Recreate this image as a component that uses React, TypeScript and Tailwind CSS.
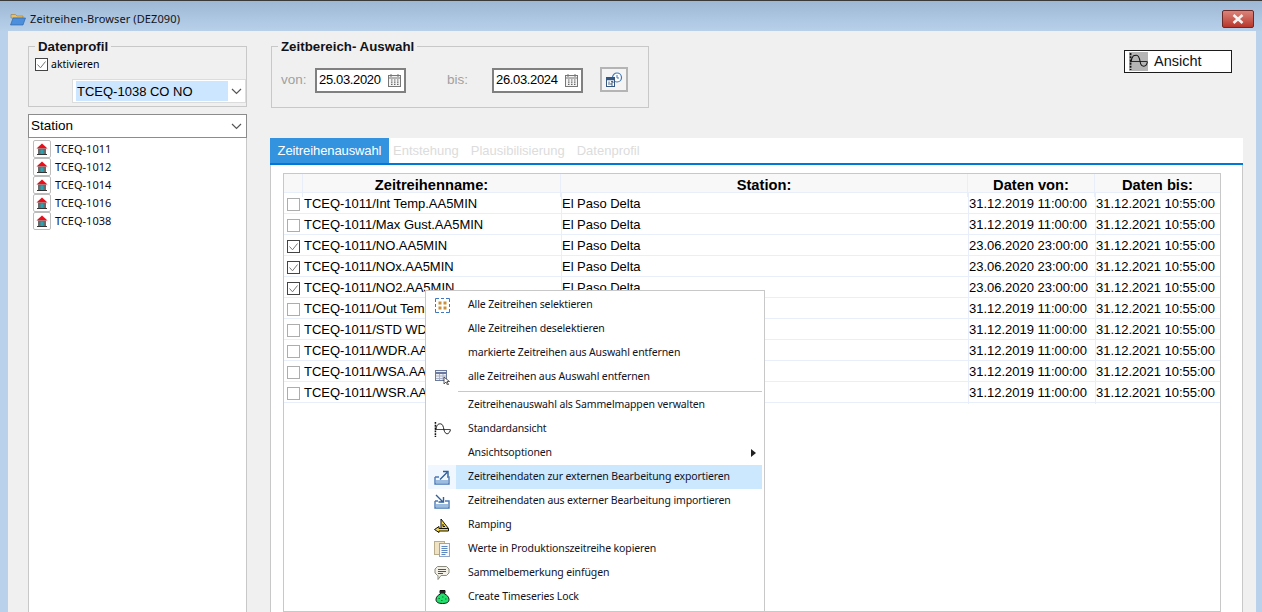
import React from 'react';

const rows = [
  { name: 'TCEQ-1011/Int Temp.AA5MIN', station: 'El Paso Delta', from: '31.12.2019 11:00:00', checked: false },
  { name: 'TCEQ-1011/Max Gust.AA5MIN', station: 'El Paso Delta', from: '31.12.2019 11:00:00', checked: false },
  { name: 'TCEQ-1011/NO.AA5MIN', station: 'El Paso Delta', from: '23.06.2020 23:00:00', checked: true },
  { name: 'TCEQ-1011/NOx.AA5MIN', station: 'El Paso Delta', from: '23.06.2020 23:00:00', checked: true },
  { name: 'TCEQ-1011/NO2.AA5MIN', station: 'El Paso Delta', from: '23.06.2020 23:00:00', checked: true },
  // station cells below sit fully under the open context menu
  { name: 'TCEQ-1011/Out Temp.AA5MIN', station: '', from: '31.12.2019 11:00:00', checked: false },
  { name: 'TCEQ-1011/STD WD.AA5MIN', station: '', from: '31.12.2019 11:00:00', checked: false },
  { name: 'TCEQ-1011/WDR.AA5MIN', station: '', from: '31.12.2019 11:00:00', checked: false },
  { name: 'TCEQ-1011/WSA.AA5MIN', station: '', from: '31.12.2019 11:00:00', checked: false },
  { name: 'TCEQ-1011/WSR.AA5MIN', station: '', from: '31.12.2019 11:00:00', checked: false },
];

const stations = ['TCEQ-1011', 'TCEQ-1012', 'TCEQ-1014', 'TCEQ-1016', 'TCEQ-1038'];

const Chevron = () => (
  <svg width="11" height="7" viewBox="0 0 11 7" fill="none" stroke="#555" strokeWidth="1.2">
    <path d="M1 1l4.500 4.500L10 1" />
  </svg>
);

const Check = ({ dark }: { dark: boolean }) => (
  <span className={`flex h-[13px] w-[13px] shrink-0 items-center justify-center border bg-white ${dark ? 'border-[#444]' : 'border-[#adadad]'}`}>
    {dark && (
      <svg width="9" height="8" viewBox="0 0 9 8" fill="none" stroke="#777" strokeWidth="1">
        <path d="M0.500 3.500L3.500 6.800L8.500 0.500" />
      </svg>
    )}
  </span>
);

const House = () => (
  <span className="flex h-[18px] w-[18px] items-center justify-center rounded-[2px] border border-[#bdbdbd] bg-white">
    <svg width="12" height="12" viewBox="0 0 12 12">
      <path d="M6 0.500L11.500 5.500H0.500z" fill="#e8101c" />
      <rect x="2" y="5.500" width="8" height="5.500" fill="#6a6a6a" />
      <rect x="4.500" y="6.500" width="3" height="4.500" fill="#27a5b5" />
      <rect x="1" y="11" width="10" height="1" fill="#333" />
    </svg>
  </span>
);

const Calendar = () => (
  <svg width="15" height="15" viewBox="0 0 15 15" fill="none">
    <rect x="1.500" y="2.500" width="12" height="11" fill="#f4f4f4" stroke="#777" />
    <path d="M1.500 5h12" stroke="#777" />
    <path d="M4 1v3M11 1v3" stroke="#777" />
    <path d="M4 7h1.500M7 7h1.500M10 7h1.500M4 9.200h1.500M7 9.200h1.500M10 9.200h1.500M4 11.400h1.500M7 11.400h1.500M10 11.400h1.500" stroke="#666" strokeWidth="1.200" />
  </svg>
);

const Wave = ({ w = 18 }: { w?: number }) => (
  <svg width={w} height={w} viewBox="0 0 18 18" fill="none" stroke="#111" strokeWidth="1">
    <path d="M1.500 1v16" strokeDasharray="2 1" strokeWidth="1.600" />
    <path d="M1 9h16" strokeWidth="0.800" />
    <path d="M2 9C3 3 5 3 7 3s3 3 3.500 6 2 4.500 3.500 4.500 3-2 3.500-4.500" />
  </svg>
);

const icons: Record<string, React.ReactNode> = {
  grid: (
    <svg width="15" height="15" viewBox="0 0 15 15" fill="none">
      <path d="M0.500 4V0.500H4M11 0.500h3.500V4M14.500 11v3.500H11M4 14.500H0.500V11M0.500 6v3M14.500 6v3M6 0.500h3M6 14.500h3" stroke="#3f78c0" />
      <rect x="3.500" y="3.500" width="3" height="3" fill="#c98f3a" />
      <rect x="8.500" y="3.500" width="3" height="3" fill="#c98f3a" />
      <rect x="3.500" y="8.500" width="3" height="3" fill="#c98f3a" />
      <rect x="8.500" y="8.500" width="3" height="3" fill="#c98f3a" />
    </svg>
  ),
  table: (
    <svg className="ml-[1px]" width="16" height="15" viewBox="0 0 16 15" fill="none">
      <rect x="0.500" y="0.500" width="11" height="10" fill="#eef0f6" stroke="#6c7aa0" />
      <path d="M0.500 3h11" stroke="#6c7aa0" strokeWidth="2" />
      <path d="M1 6h10M1 8.500h10M4.500 4v6M8 4v6" stroke="#a9b2c8" />
      <path d="M9 7v7l2-2 1.500 3 1-.5-1.500-3h2.500z" fill="#fff" stroke="#333" strokeWidth="0.800" />
    </svg>
  ),
  export: (
    <svg width="16" height="15" viewBox="0 0 16 15" fill="none">
      <path d="M1 7h4M1 7v7h14V7h-2" stroke="#4a7ab5" strokeWidth="1.400" />
      <rect x="2" y="10" width="12" height="3.500" fill="#9dbde0" />
      <path d="M6 9.500L13 2.500M9 1.500h5v5" stroke="#2f5f9a" strokeWidth="1.400" />
    </svg>
  ),
  import: (
    <svg width="16" height="15" viewBox="0 0 16 15" fill="none">
      <path d="M1 7h3M1 7v7h14V7h-4" stroke="#4a7ab5" strokeWidth="1.400" />
      <rect x="2" y="10" width="12" height="3.500" fill="#9dbde0" />
      <path d="M2 1l6.500 6.500M9.500 3v5h-5" stroke="#2f5f9a" strokeWidth="1.400" />
    </svg>
  ),
  ramp: (
    <svg width="16" height="15" viewBox="0 0 16 15" fill="none">
      <path d="M7 1L14.500 10.500H7z" fill="#f5d63c" stroke="#111" />
      <path d="M9 6v2.500h2" stroke="#111" />
      <path d="M0.500 11.500L5 8.500v2h9.500v2.500H5v1.500z" fill="#f5d63c" stroke="#111" />
    </svg>
  ),
  copy: (
    <svg width="16" height="16" viewBox="0 0 16 16" fill="none">
      <rect x="0.500" y="0.500" width="10" height="13" fill="#efe3c4" stroke="#b9ad8c" />
      <rect x="5.500" y="2.500" width="10" height="13" fill="#f5f8fd" stroke="#8fa6c8" />
      <path d="M7.500 5.500h6M7.500 7.500h6M7.500 9.500h6M7.500 11.500h6M7.500 13.500h4" stroke="#5f86bd" />
    </svg>
  ),
  note: (
    <svg width="16" height="16" viewBox="0 0 16 16" fill="none">
      <path d="M3.500 1.500h9l2.500 2.500v4l-2.500 2.500H7L4 14.500v-4H3.500L1 8V4z" fill="#f1efe6" stroke="#8c8c80" />
      <path d="M4 4.500h8M4 6.500h8M4 8.500h5" stroke="#55554c" />
    </svg>
  ),
  flask: (
    <svg width="15" height="14" viewBox="0 0 15 14" fill="none">
      <path d="M5 0.500h5v2l-0.500 1.500c2.500 1 4.500 3 4.500 5.500 0 2.500-2 4-6.500 4s-6.500-1.500-6.500-4c0-2.500 2-4.500 4.500-5.500L5 2.500z" fill="#1fe06a" stroke="#111" />
      <path d="M5 1h5v2.500H5z" fill="#222" />
      <path d="M3.500 8.500h1.500M7 7h1.500M6 10.500h1.500M10 9h1.500" stroke="#0a7a30" />
    </svg>
  ),
  sine: <Wave w={17} />,
};

type MenuEntry = { label: string; icon?: string; arrow?: boolean; active?: boolean } | 'sep';

const menu: MenuEntry[] = [
  { label: 'Alle Zeitreihen selektieren', icon: 'grid' },
  { label: 'Alle Zeitreihen deselektieren' },
  { label: 'markierte Zeitreihen aus Auswahl entfernen' },
  { label: 'alle Zeitreihen aus Auswahl entfernen', icon: 'table' },
  'sep',
  { label: 'Zeitreihenauswahl als Sammelmappen verwalten' },
  { label: 'Standardansicht', icon: 'sine' },
  { label: 'Ansichtsoptionen', arrow: true },
  { label: 'Zeitreihendaten zur externen Bearbeitung exportieren', icon: 'export', active: true },
  { label: 'Zeitreihendaten aus externer Bearbeitung importieren', icon: 'import' },
  { label: 'Ramping', icon: 'ramp' },
  { label: 'Werte in Produktionszeitreihe kopieren', icon: 'copy' },
  { label: 'Sammelbemerkung einfügen', icon: 'note' },
  { label: 'Create Timeseries Lock', icon: 'flask' },
];

const DateBox = ({ value }: { value: string }) => (
  <div className="flex h-[25px] w-[91px] items-center justify-between border-2 border-[#808080] bg-white pl-[2px] pr-[2px] text-[13px] text-black">
    <span className="tracking-[-0.35px]">{value}</span>
    <Calendar />
  </div>
);

export default function App() {
  return (
    <div className="relative flex h-[612px] w-[1262px] flex-col overflow-hidden border-t border-[#3a3a3a] bg-[#b9d1ea] font-['Liberation_Sans',sans-serif] text-[13px] text-black">
      <div className="flex h-[30px] shrink-0 items-center bg-gradient-to-b from-[#9db8d5] to-[#b8d0ea] pl-[10px] pr-[8px] pt-[6px]">
        <svg width="16" height="14" viewBox="0 0 16 14">
          <path d="M1 2.500h4.500L7 4h6v2H1z" fill="#e8c06a" stroke="#9a7c3a" strokeWidth="0.600" />
          <path d="M0.500 13L3 6h12.500L13 13z" fill="#4c8fdc" stroke="#2c5f9f" strokeWidth="0.600" />
        </svg>
        <span className="ml-[4px] font-['Noto_Sans',sans-serif] text-[11px] tracking-[0.1px] text-[#10151c]">Zeitreihen-Browser (DEZ090)</span>
        <button className="ml-auto flex h-[18px] w-[32px] items-center justify-center rounded-[2px] border border-[#6b2a28] bg-gradient-to-b from-[#d9837a] to-[#b8352b]">
          <svg width="14" height="10" viewBox="0 0 14 10" fill="none" stroke="#f4f4f4" strokeWidth="2.600">
            <path d="M2.500 1l9 8M11.500 1l-9 8" />
          </svg>
        </button>
      </div>

      <div className="ml-[8px] mr-[6px] flex min-h-0 flex-1 bg-[#f0f0f0] pl-[20px]">
        <aside className="flex w-[219px] shrink-0 flex-col pt-[15px]">
          <div className="relative h-[61px] border border-[#c8c8c8]">
            <span className="absolute left-[6px] top-[-8px] bg-[#f0f0f0] px-[3px] text-[13.3px] font-bold leading-[16px] text-[#10131a]">Datenprofil</span>
            <div className="ml-[6px] mt-[11px] flex items-center">
              <Check dark />
              <span className="ml-[3px] font-['Noto_Sans',sans-serif] text-[10.5px] leading-[13px]">aktivieren</span>
            </div>
            <div className="ml-[43px] mt-[8px] flex h-[24px] items-center border border-[#dcdcdc] bg-white pl-[2px]">
              <span className="ml-[1px] flex h-[20px] w-[152px] items-center bg-[#cde6ff] pl-[1px] text-[13px] leading-none">TCEQ-1038 CO NO</span>
              <span className="ml-[3px]"><Chevron /></span>
            </div>
          </div>
          <div className="mt-[7px] flex h-[24px] shrink-0 items-center justify-between border border-[#8c8c8c] bg-white pl-[2px] pr-[4px] text-[13.5px]">
            <span>Station</span>
            <Chevron />
          </div>
          <div className="flex min-h-0 flex-1 flex-col border-x border-[#c8c8c8] bg-white pl-[4px] pt-[2px]">
            {stations.map(s => (
              <div key={s} className="flex h-[18px] items-center">
                <House />
                <span className="ml-[4px] font-['Noto_Sans',sans-serif] text-[11px] text-[#0c0c18]">{s}</span>
              </div>
            ))}
          </div>
        </aside>

        <main className="ml-[23px] flex w-[973px] shrink-0 flex-col pt-[15px]">
          <div className="flex h-[92px] shrink-0 items-start">
            <div className="relative ml-[1px] flex h-[62px] w-[378px] items-center border border-[#c8c8c8] pl-[9px] pt-[6px] text-[#a0a0a0]">
              <span className="absolute left-[6px] top-[-8px] bg-[#f0f0f0] px-[3px] text-[13.3px] font-bold leading-[16px] text-[#10131a]">Zeitbereich- Auswahl</span>
              <span className="w-[34px] text-[13.5px]">von:</span>
              <DateBox value="25.03.2020" />
              <span className="ml-[41px] w-[45px] text-[13.5px]">bis:</span>
              <DateBox value="26.03.2024" />
              <button className="ml-[17px] mt-[-2px] flex h-[25px] w-[28px] items-center justify-center border-2 border-[#b4b4b4] bg-[#f4f4f4]">
                <svg width="17" height="15" viewBox="0 0 17 15" fill="none">
                  <circle cx="11" cy="5.500" r="4.500" fill="#fff" stroke="#3f78b8" strokeWidth="1.200" />
                  <path d="M11 3v3h2" stroke="#3f78b8" />
                  <rect x="0.500" y="5.500" width="8" height="9" fill="#fff" stroke="#35567f" />
                  <path d="M0.500 7h8" stroke="#35567f" strokeWidth="2.500" />
                  <path d="M3 9.500v3.500M5 9.500h2v1.500H5v2h2" stroke="#35567f" strokeWidth="0.900" />
                </svg>
              </button>
            </div>
            <button className="ml-auto mr-[11px] mt-[4px] flex h-[23px] w-[108px] items-center border border-[#1c1c1c] bg-white pl-[4px] text-[14.5px]">
              <span className="bg-[#b4b4b4]"><Wave w={19} /></span>
              <span className="ml-[6px] text-[#10131a]">Ansicht</span>
            </button>
          </div>

          <div className="flex h-[27px] shrink-0 items-stretch border-b-2 border-[#0078d7] bg-white text-[13px] text-[#dcdcdc]">
            <span className="flex w-[119px] items-center justify-center bg-[#3393df] tracking-[-0.1px] text-white">Zeitreihenauswahl</span>
            <span className="ml-[4px] flex items-center">Entstehung</span>
            <span className="ml-[12px] flex items-center">Plausibilisierung</span>
            <span className="ml-[12px] flex items-center">Datenprofil</span>
          </div>

          <div className="flex min-h-0 flex-1 flex-col border-x border-[#c8c8c8] bg-white pl-[12px] pr-[21px] pt-[8px]">
            <div className="flex-1 border border-[#c8c8c8] text-[13px]">
              <div className="grid h-[18px] grid-cols-[19px_258px_407px_127px_125px] bg-[#f8f8f8] text-[14.7px] font-bold leading-[23px]">
                <span className="border-r border-[#e8eefa]" />
                <span className="border-r border-[#e8eefa] text-center">Zeitreihenname:</span>
                <span className="border-r border-[#e8eefa] text-center">Station:</span>
                <span className="border-r border-[#e8eefa] text-center">Daten von:</span>
                <span className="text-center">Daten bis:</span>
              </div>
              {rows.map(r => (
                <div key={r.name} className="grid h-[21px] grid-cols-[19px_258px_407px_127px_125px] border-t border-[#e8eefa] leading-[22px] tracking-[-0.02px]">
                  <span className="flex items-center pl-[3px] pt-[1px]"><Check dark={r.checked} /></span>
                  <span className="border-r border-transparent pl-[1px]">{r.name}</span>
                  <span className="border-l border-[#e8eefa]">{r.station}</span>
                  <span className="border-l border-[#e8eefa]">{r.from}</span>
                  <span className="border-l border-[#e8eefa]">31.12.2021 10:55:00</span>
                </div>
              ))}
              <div className="border-t border-[#e8eefa]" />
            </div>
          </div>
        </main>
      </div>

      <div className="absolute left-[425px] top-[289px] w-[340px] border border-[#c8c8c8] bg-white px-[2px] pb-[2px] pt-[2px] font-['Noto_Sans',sans-serif] text-[10.5px] tracking-[-0.12px] text-[#12121e]">
        {menu.map((m, i) =>
          m === 'sep' ? (
            <div key={i} className="mb-[1px] ml-[30px] h-[3px] border-b border-[#c8c8c8]" />
          ) : (
            <div key={i} className="flex h-[24px] items-center">
              <span className={`flex h-full w-[28px] shrink-0 items-center justify-center ${m.active ? 'bg-[#f0f7ff]' : ''}`}>
                {m.icon ? icons[m.icon] : null}
              </span>
              <span className={`flex h-full flex-1 items-center pl-[12px] ${m.active ? 'bg-[#cce8ff]' : ''}`}>{m.label}</span>
              {m.arrow && (
                <svg className="absolute left-[325px]" width="5" height="8" viewBox="0 0 5 8"><path d="M0 0l5 4-5 4z" fill="#222" /></svg>
              )}
            </div>
          )
        )}
      </div>
    </div>
  );
}
